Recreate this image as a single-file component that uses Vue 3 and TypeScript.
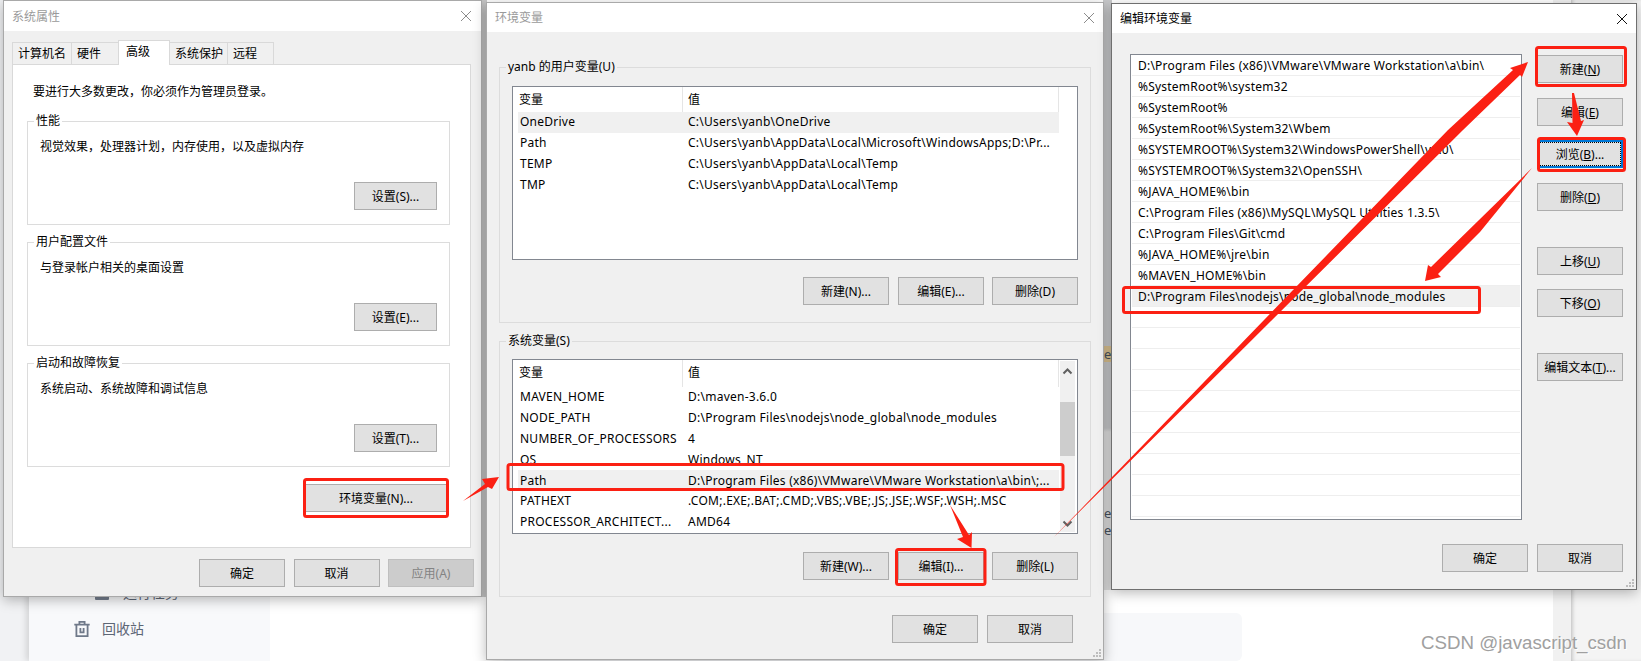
<script setup lang="ts">
interface Row { name: string; value: string; active?: boolean }
interface Btn { label: string; key?: string; tail?: string; cls?: string }

const tabs = [
  { label: '计算机名', cls: 't1' },
  { label: '硬件', cls: 't2' },
  { label: '高级', cls: 't3 on' },
  { label: '系统保护', cls: 't4' },
  { label: '远程', cls: 't5' },
]
const groups = [
  { title: '性能', text: '视觉效果，处理器计划，内存使用，以及虚拟内存', btn: '设置(S)...' },
  { title: '用户配置文件', text: '与登录帐户相关的桌面设置', btn: '设置(E)...' },
  { title: '启动和故障恢复', text: '系统启动、系统故障和调试信息', btn: '设置(T)...' },
]
const userRows: Row[] = [
  { name: 'OneDrive', value: 'C:\\Users\\yanb\\OneDrive', active: true },
  { name: 'Path', value: 'C:\\Users\\yanb\\AppData\\Local\\Microsoft\\WindowsApps;D:\\Pr...' },
  { name: 'TEMP', value: 'C:\\Users\\yanb\\AppData\\Local\\Temp' },
  { name: 'TMP', value: 'C:\\Users\\yanb\\AppData\\Local\\Temp' },
]
const sysRows: Row[] = [
  { name: 'MAVEN_HOME', value: 'D:\\maven-3.6.0' },
  { name: 'NODE_PATH', value: 'D:\\Program Files\\nodejs\\node_global\\node_modules' },
  { name: 'NUMBER_OF_PROCESSORS', value: '4' },
  { name: 'OS', value: 'Windows_NT' },
  { name: 'Path', value: 'D:\\Program Files (x86)\\VMware\\VMware Workstation\\a\\bin\\;...', active: true },
  { name: 'PATHEXT', value: '.COM;.EXE;.BAT;.CMD;.VBS;.VBE;.JS;.JSE;.WSF;.WSH;.MSC' },
  { name: 'PROCESSOR_ARCHITECT...', value: 'AMD64' },
]
const paths: string[] = [
  'D:\\Program Files (x86)\\VMware\\VMware Workstation\\a\\bin\\',
  '%SystemRoot%\\system32',
  '%SystemRoot%',
  '%SystemRoot%\\System32\\Wbem',
  '%SYSTEMROOT%\\System32\\WindowsPowerShell\\v1.0\\',
  '%SYSTEMROOT%\\System32\\OpenSSH\\',
  '%JAVA_HOME%\\bin',
  'C:\\Program Files (x86)\\MySQL\\MySQL Utilities 1.3.5\\',
  'C:\\Program Files\\Git\\cmd',
  '%JAVA_HOME%\\jre\\bin',
  '%MAVEN_HOME%\\bin',
  'D:\\Program Files\\nodejs\\node_global\\node_modules',
  '', '', '', '', '', '', '', '', '', '',
]
const sideButtons: Btn[] = [
  { label: '新建(', key: 'N', tail: ')', cls: 'mt1' },
  { label: '编辑(', key: 'E', tail: ')', cls: 'mt15' },
  { label: '浏览(', key: 'B', tail: ')...', cls: 'mt14 focus' },
  { label: '删除(', key: 'D', tail: ')', cls: 'mt15' },
  { label: '上移(', key: 'U', tail: ')', cls: 'mt36' },
  { label: '下移(', key: 'O', tail: ')', cls: 'mt14' },
  { label: '编辑文本(', key: 'T', tail: ')...', cls: 'mt36' },
]
</script>

<template>
  <div class="desk">
    <!-- page behind the dialogs -->
    <div class="page">
      <aside class="side">
        <div class="side-item indent">
          <svg class="side-ico small" viewBox="0 0 14 14"><rect x="0" y="0" width="14" height="14" rx="1" fill="#737d8c" /></svg>
          <span>运行任务</span>
        </div>
        <div class="side-item">
          <svg class="side-ico" viewBox="0 0 16 16" fill="none" stroke="#6f7989" stroke-width="1.8">
            <path d="M0.3 3.6h15.4M5.4 3.6v-2.7h5.2v2.7M2.4 3.6v11.5h11.2v-11.5M6.4 7v4.4h3.2v-4.4" />
          </svg>
          <span>回收站</span>
        </div>
      </aside>
      <main class="main"><div class="card"></div></main>
      <div class="gutter"></div>
      <div class="edge"></div>
    </div>
    <div class="strip strip-a"></div>
    <div class="strip strip-b"></div>
    <span class="frag frag-1">e_</span>
    <span class="frag frag-2">es</span>
    <span class="frag frag-3">es</span>

    <!-- 系统属性 -->
    <section class="win win-a">
      <header class="bar bar-a">
        <span class="title dim">系统属性</span>
        <svg class="close" viewBox="0 0 10 10"><path d="M0 0L10 10M10 0L0 10" stroke="#8c8c8c" fill="none" /></svg>
      </header>
      <div class="body-a">
        <div class="tabs">
          <div v-for="t in tabs" :key="t.label" class="tab" :class="t.cls">{{ t.label }}</div>
        </div>
        <div class="panel">
          <p class="note">要进行大多数更改，你必须作为管理员登录。</p>
          <fieldset v-for="g in groups" :key="g.title" class="group group-a">
            <legend>{{ g.title }}</legend>
            <p class="desc">{{ g.text }}</p>
            <button class="btn btn-s">{{ g.btn }}</button>
          </fieldset>
          <button class="btn btn-env">环境变量(N)...</button>
        </div>
        <div class="foot foot-a">
          <button class="btn">确定</button>
          <button class="btn">取消</button>
          <button class="btn off">应用(A)</button>
        </div>
      </div>
    </section>

    <!-- 环境变量 -->
    <section class="win win-b">
      <header class="bar">
        <span class="title dim">环境变量</span>
        <svg class="close" viewBox="0 0 10 10"><path d="M0 0L10 10M10 0L0 10" stroke="#8c8c8c" fill="none" /></svg>
      </header>
      <div class="body-b">
        <fieldset class="group group-b">
          <legend>yanb 的用户变量(U)</legend>
          <div class="list list-user">
            <div class="row head"><span class="hcell">变量</span><span class="hval">值</span></div>
            <div v-for="r in userRows" :key="r.name" class="row" :class="{ active: r.active }">
              <span class="cell">{{ r.name }}</span><span>{{ r.value }}</span>
            </div>
          </div>
          <div class="acts">
            <button class="btn">新建(N)...</button>
            <button class="btn">编辑(E)...</button>
            <button class="btn">删除(D)</button>
          </div>
        </fieldset>
        <fieldset class="group group-b">
          <legend>系统变量(S)</legend>
          <div class="list list-sys">
            <div class="row head"><span class="hcell">变量</span><span class="hval">值</span></div>
            <div v-for="r in sysRows" :key="r.name" class="row" :class="{ active: r.active }">
              <span class="cell">{{ r.name }}</span><span>{{ r.value }}</span>
            </div>
            <div class="scroll">
              <svg viewBox="0 0 15 17" class="sb-ico"><path d="M3.5 10.5L7.5 6.5L11.5 10.5" fill="none" stroke="#606060" stroke-width="2" /></svg>
              <div class="thumb"></div>
              <svg viewBox="0 0 15 17" class="sb-ico sb-end"><path d="M3.5 6.5L7.5 10.5L11.5 6.5" fill="none" stroke="#606060" stroke-width="2" /></svg>
            </div>
          </div>
          <div class="acts acts-sys">
            <button class="btn">新建(W)...</button>
            <button class="btn">编辑(I)...</button>
            <button class="btn">删除(L)</button>
          </div>
        </fieldset>
        <div class="foot foot-b">
          <button class="btn">确定</button>
          <button class="btn">取消</button>
        </div>
      </div>
      <svg class="grip" viewBox="0 0 8 8"><path d="M6 0h2v2h-2zM3 3h2v2h-2zM6 3h2v2h-2zM0 6h2v2h-2zM3 6h2v2h-2zM6 6h2v2h-2z" fill="#bdbdbd" /></svg>
    </section>

    <!-- 编辑环境变量 -->
    <section class="win win-c">
      <header class="bar">
        <span class="title">编辑环境变量</span>
        <svg class="close" viewBox="0 0 10 10"><path d="M0 0L10 10M10 0L0 10" stroke="#111" fill="none" /></svg>
      </header>
      <div class="body-c">
        <div class="edit-main">
          <div class="pathlist">
            <div v-for="(p, i) in paths" :key="i" class="pathrow" :class="{ active: i === 11 }">{{ p }}</div>
          </div>
          <div class="side-btns">
            <button v-for="b in sideButtons" :key="b.label" class="btn" :class="b.cls">
              <span class="cap">{{ b.label }}<u>{{ b.key }}</u>{{ b.tail }}</span>
            </button>
          </div>
        </div>
        <div class="foot foot-c">
          <button class="btn">确定</button>
          <button class="btn">取消</button>
        </div>
      </div>
      <svg class="grip" viewBox="0 0 8 8"><path d="M6 0h2v2h-2zM3 3h2v2h-2zM6 3h2v2h-2zM0 6h2v2h-2zM3 6h2v2h-2zM6 6h2v2h-2z" fill="#bdbdbd" /></svg>
    </section>

    <!-- annotations drawn on top of the screenshot -->
    <svg class="marks" viewBox="0 0 1641 661">
      <g fill="none" stroke="#fb2013" stroke-width="3">
        <rect x="304.5" y="479.5" width="143" height="37" rx="2" />
        <rect x="508" y="464.5" width="555" height="25" rx="2" />
        <rect x="896.5" y="549.5" width="88.5" height="35" rx="2" />
        <rect x="1536.5" y="47.5" width="89" height="38" rx="2" />
        <rect x="1538.5" y="138.5" width="86" height="32" rx="2" />
        <rect x="1123.5" y="287.5" width="356" height="25" rx="2" />
      </g>
      <g fill="#fb2013">
        <polygon points="463,501 485,484 482,479 499,477 492,489 488,487" />
        <polygon points="1053,538 1448,130 1513,70 1510,68 1528,62 1522,77 1520,75 1463,130" />
        <polygon points="1572,93 1574,93 1581,121 1584,120 1577,136 1567,122 1572.5,123" />
        <polygon points="1532,168 1431,267 1428,265 1425,281 1441,277 1438,274 1480,232" />
        <polygon points="950,505 969,535 972,532 971.5,548 957,539 963,537" />
      </g>
    </svg>

    <span class="mark-text">CSDN @javascript_csdn</span>
  </div>
</template>

<style scoped>
.desk {
  position: relative;
  width: 1641px;
  height: 661px;
  overflow: hidden;
  font-family: "Noto Sans", "Noto Sans CJK SC", sans-serif;
  font-size: 12px;
  line-height: 16px;
  color: #000;
  background: #f1f2f4;
}
p { margin: 0; }

/* page behind */
.page {
  display: grid;
  grid-template-columns: 29px 241px 1283px 18px 1fr;
  height: 100%;
}
.page .side { grid-column: 2; }
.side {
  background: #f8f9fb;
  padding-top: 575px;
  box-shadow: -3px 0 6px rgba(0, 0, 0, 0.12);
  color: #5d6675;
  font-size: 14px;
}
.side-item {
  display: flex;
  align-items: center;
  gap: 12px;
  height: 36px;
  padding-left: 45px;
}
.side-item.indent { padding-left: 66px; gap: 14px; }
.side-ico { width: 16px; height: 16px; }
.side-ico.small { width: 14px; height: 14px; }
.main { background: #fff; padding: 613px 311px 0 230px; }
.card { height: 48px; background: #f7f8fa; border-radius: 6px; }
.gutter { background: #f1f1f1; }
.edge { background: #f4f4f4; box-shadow: inset 3px 0 4px -2px rgba(0, 0, 0, 0.25); }
.strip { position: absolute; }
.strip-a { left: 482px; top: 0; width: 5px; height: 597px; background: #cbcbcb; }
.strip-b {
  left: 1103px;
  top: 0;
  width: 9px;
  height: 590px;
  background: linear-gradient(#c9cacc 0, #c9cacc 428px, #e2e2e2 432px, #e2e2e2 100%);
}
.frag { position: absolute; left: 1104px; font-size: 13px; color: #47525f; }
.frag-1 { top: 346px; background: #dcc391; }
.frag-2 { top: 505px; }
.frag-3 { top: 522px; }

/* windows */
.win {
  position: absolute;
  box-sizing: border-box;
  background: #f0f0f0;
  border: 1px solid #a9a9a9;
  box-shadow: 0 3px 12px rgba(0, 0, 0, 0.28);
  display: flex;
  flex-direction: column;
}
.win-a { left: 3px; top: 0; width: 479px; height: 597px; }
.win-b { left: 486px; top: 2px; width: 618px; height: 658px; }
.win-c { left: 1111px; top: 3px; width: 526px; height: 587px; border-color: #6f6f6f; }

.bar {
  flex: none;
  height: 29px;
  padding: 0 9px 0 8px;
  background: #fff;
  display: flex;
  align-items: center;
  justify-content: space-between;
}
.bar-a { height: 30px; padding-right: 10px; }
.title { padding-top: 1px; }
.dim { color: #9a9a9a; }
.close { width: 10px; height: 10px; }

.btn {
  box-sizing: border-box;
  width: 86px;
  height: 28px;
  padding: 1px 0 0;
  margin: 0;
  font: inherit;
  color: #000;
  background: #e1e1e1;
  border: 1px solid #adadad;
  display: flex;
  align-items: center;
  justify-content: center;
  flex: none;
}
.off { background: #cccccc; border-color: #bfbfbf; color: #838383; }

/* first dialog */
.body-a { padding: 9px 10px 0 8px; display: flex; flex-direction: column; }
.tabs { display: flex; align-items: flex-end; height: 25px; padding-left: 1px; margin-bottom: -1px; position: relative; z-index: 1; }
.tab {
  box-sizing: border-box;
  height: 22px;
  display: flex;
  align-items: center;
  padding: 1px 0 0 5px;
  background: #f0f0f0;
  border: 1px solid #d9d9d9;
  border-bottom: none;
  margin-left: -1px;
}
.tab.t1 { width: 60px; margin-bottom: 1px; }
.tab.t2 { width: 48px; margin-bottom: 1px; }
.tab.t3 { width: 52px; height: 25px; background: #fff; padding: 0 0 2px 7px; }
.tab.t4 { width: 59px; margin-bottom: 1px; }
.tab.t5 { width: 47px; margin-bottom: 1px; }
.panel {
  box-sizing: border-box;
  height: 484px;
  background: #fff;
  border: 1px solid #d9d9d9;
  padding: 19px 0 0 14px;
  display: flex;
  flex-direction: column;
}
.note { margin: 0 0 13px 6px; }
.group {
  margin: 0;
  min-width: 0;
  box-sizing: border-box;
  border: 1px solid #dcdcdc;
  padding: 0 12px 14px 8px;
  display: flex;
  flex-direction: column;
}
.group legend { padding: 0 2px; margin-left: -2px; line-height: 16px; }
.group-a { width: 423px; height: 112px; margin-bottom: 9px; }
.desc { margin: 10px 0 27px 4px; }
.btn-s { width: 83px; align-self: flex-end; }
.btn-env { width: 142px; align-self: flex-end; margin: 8px 23px 0 0; }
.foot { display: flex; justify-content: flex-end; }
.foot-a { gap: 8.5px; padding: 11px 0 0 0; margin-right: -3px; }

/* second dialog */
.body-b { padding: 27px 12px 0 12px; display: flex; flex-direction: column; gap: 10px; }
.group-b { height: 264px; padding: 0 12px 17px 12px; }
.group-b legend { margin-left: -6px; }
.list {
  position: relative;
  box-sizing: border-box;
  margin-top: 11px;
  background: #fff;
  border: 1px solid #828790;
  padding: 0 18px 0 5px;
  overflow: hidden;
}
.list-user { height: 174px; }
.list-sys { height: 175px; margin-top: 10px; }
.list-sys .row.head { height: 26.5px; }
.row {
  display: grid;
  grid-template-columns: 170px 1fr;
  height: 20.9px;
  align-items: center;
  white-space: nowrap;
  letter-spacing: 0.25px;
}
.row.active { background: #f0f0f0; }
.row.head { height: 25px; letter-spacing: 0; }
.hcell { width: 165px; height: 100%; padding-left: 1px; box-sizing: border-box; border-right: 1px solid #e5e5e5; display: flex; align-items: center; }
.hval { height: 100%; display: flex; align-items: center; border-right: 1px solid #e5e5e5; }
.cell { padding-left: 2px; }
.scroll {
  position: absolute;
  right: 2px;
  top: 1px;
  bottom: 1px;
  width: 15px;
  background: #f0f0f0;
  display: flex;
  flex-direction: column;
}
.sb-ico { width: 15px; height: 17px; margin-top: 2px; flex: none; }
.thumb { height: 54px; margin-top: 22px; background: #cdcdcd; }
.sb-end { margin-top: auto; margin-bottom: 0; }
.acts { display: flex; justify-content: flex-end; gap: 8px; margin: 17px 0 0; }
.acts .btn:first-child { margin-right: 1px; }
.acts-sys { margin-top: 18px; }
.foot-b { gap: 9px; margin: 8px 18px 0 0; }

/* third dialog */
.body-c { padding: 21px 13px 0 18px; display: flex; flex-direction: column; }
.edit-main { display: flex; gap: 15px; }
.pathlist {
  box-sizing: border-box;
  width: 392px;
  height: 466px;
  background: #fff;
  border: 1px solid #828790;
  padding: 0 1px;
}
.pathrow {
  box-sizing: border-box;
  height: 21px;
  padding: 2px 0 0 6px;
  display: flex;
  align-items: center;
  border-bottom: 1px solid #eeeeee;
  white-space: nowrap;
  letter-spacing: 0.22px;
}
.pathrow.active { background: #f0f0f0; }
.side-btns { display: flex; flex-direction: column; }
.mt1 { margin-top: 1px; }
.mt14 { margin-top: 14px; }
.mt15 { margin-top: 15px; }
.mt36 { margin-top: 36px; }
.focus { border: 2px solid #0078d7; outline: 1px dotted #000; outline-offset: -3px; }
.foot-c { gap: 9px; margin-top: 24px; }

.grip { position: absolute; right: 2px; bottom: 2px; width: 8px; height: 8px; }

.marks { position: absolute; left: 0; top: 0; width: 1641px; height: 661px; pointer-events: none; }
.mark-text {
  position: absolute;
  right: 14px;
  top: 632px;
  font-family: "Liberation Sans", sans-serif;
  font-size: 18.7px;
  line-height: 22px;
  color: #a0a0a0;
  text-shadow: 1px 1px 0 #fff;
}
</style>

<style>
html, body { margin: 0; overflow: hidden; }
</style>
